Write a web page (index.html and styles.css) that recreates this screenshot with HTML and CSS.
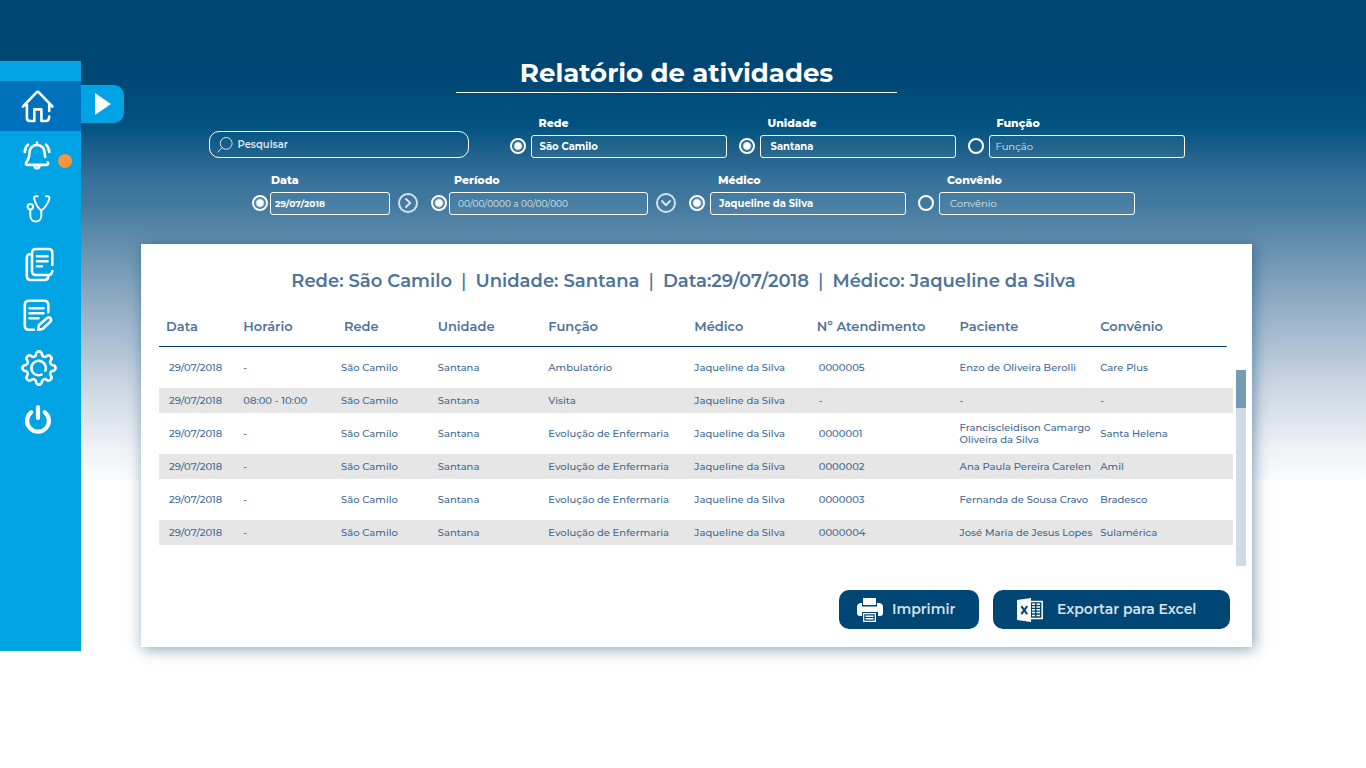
FILE: index.html
```html
<!DOCTYPE html>
<html lang="pt-BR">
<head>
<meta charset="utf-8">
<meta name="viewport" content="width=device-width, initial-scale=1">
<title>Relatório de atividades</title>
<link rel="stylesheet" href="styles.css">
</head>
<body>
<div class="page">
  <nav class="sidebar" aria-label="Menu principal">
    <a class="nav-item active" href="#inicio" aria-label="Início"><svg class="icon" viewBox="0 0 40 40"><path d="M5 20.5 18.3 6.6Q19.7 5.2 21.1 6.6L34.4 20.5M8.9 18V32Q8.9 35 12 35H16.3V23.4H23.4V35H28Q31 35 31.2 30.6M31.2 18V25"/></svg></a>
    <a class="nav-item" href="#avisos" aria-label="Avisos"><svg class="icon" viewBox="0 0 40 40"><path d="M19 5.5V8M27.2 20C26.5 17 27 15.5 25.8 12.3C23 6.5 15 6.5 12.2 12.3C10.8 16 12 19 10 22.5L8.2 25.5Q7.2 27.9 9.5 27.9H28.5Q31 27.9 29.8 25.3M16.6 29Q17 31.3 19 31.3T21.4 29"/><path d="M10 7.6Q6.8 10.5 6.8 15M28 7.6Q31.2 10.5 31.2 15"/></svg><span class="dot"></span></a>
    <a class="nav-item" href="#atendimentos" aria-label="Atendimentos"><svg class="icon thin" viewBox="0 0 40 40"><path d="M19.7 7.3H17.8Q15 8 16.6 11C18 16 20 19 23.3 21.5C27 19 29 16 31 11Q32.4 7.7 29.5 7.3H28M23.3 21.5V26.5C23.3 34.5 12.3 34.5 12.3 26.5V21"/><circle cx="12.3" cy="17.8" r="2.7"/></svg></a>
    <a class="nav-item spaced" href="#documentos" aria-label="Documentos"><svg class="icon" viewBox="0 0 40 40"><path d="M34.3 21V8.7Q34.3 5 30.6 5H18Q14 5 14 9V27Q14 31 18 31H30.5Q34 31 34.3 27M14 10H12.8Q8.8 10 8.8 14V32Q8.8 36 12.8 36H26.2Q30 36 30.4 32M19 12.3H29.5M19 17.3H29.5M19 22.3H24"/></svg></a>
    <a class="nav-item" href="#registros" aria-label="Registros"><svg class="icon" viewBox="0 0 40 40"><path d="M30.3 16.3V9Q30.3 4.7 26 4.7H11Q6.8 4.7 6.8 9V29.5Q6.8 33.7 11 33.7H16M11.5 12.3H25.5M11.5 17.3H25.5M11.5 22.3H20.5M20.2 33.8 21 29 28.8 22.2Q31 20.5 32.6 22.3Q34 24.2 32 26L24.7 33Z"/></svg></a>
    <a class="nav-item" href="#ajustes" aria-label="Ajustes"><svg class="icon" viewBox="0 0 40 40"><path d="M18.1 6.3A2.9 2.9 0 0 1 23.9 6.3A3 3 0 0 0 28.6 8.3A2.9 2.9 0 0 1 32.7 12.4A3 3 0 0 0 34.7 17.1A2.9 2.9 0 0 1 34.7 22.9A3 3 0 0 0 32.7 27.6A2.9 2.9 0 0 1 28.6 31.7A3 3 0 0 0 23.9 33.7A2.9 2.9 0 0 1 18.1 33.7A3 3 0 0 0 13.4 31.7A2.9 2.9 0 0 1 9.3 27.6A3 3 0 0 0 7.3 22.9A2.9 2.9 0 0 1 7.3 17.1A3 3 0 0 0 9.3 12.4A2.9 2.9 0 0 1 13.4 8.3A3 3 0 0 0 18.1 6.3Z"/><path d="M27.3 22.6A7.2 7.2 0 1 0 23.5 26.6"/></svg></a>
    <a class="nav-item" href="#sair" aria-label="Sair"><svg class="icon power" viewBox="0 0 40 40"><path d="M13.3 12.2A10.9 10.9 0 1 0 26.7 12.2M20 7.2V18"/></svg></a>
    <button class="expand" type="button" aria-label="Expandir menu"><svg viewBox="0 0 18 22"><path d="M1 0 17 11 1 22Z"/></svg></button>
  </nav>

  <main class="main">
    <header class="page-title"><h1>Relatório de atividades</h1></header>

    <form class="filters">
      <div class="filter-row">
        <div class="search">
          <svg viewBox="0 0 16 16"><circle cx="9.2" cy="6.4" r="5.9"/><path d="M5 10.8 .8 15.2"/></svg>
          <input type="search" placeholder="Pesquisar" aria-label="Pesquisar">
        </div>
        <div class="field">
          <input class="pick" type="radio" name="usar-rede" aria-label="Filtrar por rede" checked>
          <div class="control"><label for="rede">Rede</label><input id="rede" type="text" value="São Camilo"></div>
        </div>
        <div class="field">
          <input class="pick" type="radio" name="usar-unidade" aria-label="Filtrar por unidade" checked>
          <div class="control"><label for="unidade">Unidade</label><input id="unidade" class="indent" type="text" value="Santana"></div>
        </div>
        <div class="field">
          <input class="pick" type="radio" name="usar-funcao" aria-label="Filtrar por função">
          <div class="control"><label for="funcao">Função</label><input id="funcao" class="tight" type="text" placeholder="Função"></div>
        </div>
      </div>
      <div class="filter-row second">
        <div class="field near date">
          <input class="pick" type="radio" name="usar-data" aria-label="Filtrar por data" checked>
          <div class="control"><label for="data">Data</label><input id="data" type="text" value="29/07/2018"></div>
          <button class="chevron" type="button" aria-label="Próxima data"><svg viewBox="0 0 20 20"><circle cx="10" cy="10" r="9"/><path d="M8 6 12.2 10 8 14"/></svg></button>
        </div>
        <div class="field near period">
          <input class="pick" type="radio" name="usar-periodo" aria-label="Filtrar por período" checked>
          <div class="control"><label for="periodo">Período</label><input id="periodo" type="text" placeholder="00/00/0000 a 00/00/000"></div>
          <button class="chevron" type="button" aria-label="Abrir período"><svg viewBox="0 0 20 20"><circle cx="10" cy="10" r="9"/><path d="M6 8 10 12.2 14 8"/></svg></button>
        </div>
        <div class="field">
          <input class="pick" type="radio" name="usar-medico" aria-label="Filtrar por médico" checked>
          <div class="control"><label for="medico">Médico</label><input id="medico" type="text" value="Jaqueline da Silva"></div>
        </div>
        <div class="field">
          <input class="pick" type="radio" name="usar-convenio" aria-label="Filtrar por convênio">
          <div class="control"><label for="convenio">Convênio</label><input id="convenio" class="indent" type="text" placeholder="Convênio"></div>
        </div>
      </div>
    </form>

    <section class="report">
      <h2 class="summary"><span>Rede: São Camilo</span><span class="bar">|</span><span>Unidade: Santana</span><span class="bar">|</span><span>Data:29/07/2018</span><span class="bar">|</span><span>Médico: Jaqueline da Silva</span></h2>
      <div class="table-area">
        <table class="activities">
          <colgroup><col class="c-data"><col class="c-horario"><col class="c-rede"><col class="c-unidade"><col class="c-funcao"><col class="c-medico"><col class="c-numero"><col class="c-paciente"><col class="c-convenio"></colgroup>
          <thead><tr><th>Data</th><th>Horário</th><th class="shifted">Rede</th><th>Unidade</th><th>Função</th><th>Médico</th><th>Nº Atendimento</th><th>Paciente</th><th>Convênio</th></tr></thead>
          <tbody>
            <tr><td>29/07/2018</td><td>-</td><td>São Camilo</td><td>Santana</td><td>Ambulatório</td><td>Jaqueline da Silva</td><td class="number">0000005</td><td>Enzo de Oliveira Berolli</td><td>Care Plus</td></tr>
            <tr><td>29/07/2018</td><td>08:00 - 10:00</td><td>São Camilo</td><td>Santana</td><td>Visita</td><td>Jaqueline da Silva</td><td class="number">-</td><td>-</td><td>-</td></tr>
            <tr><td>29/07/2018</td><td>-</td><td>São Camilo</td><td>Santana</td><td>Evolução de Enfermaria</td><td>Jaqueline da Silva</td><td class="number">0000001</td><td>Franciscleidison Camargo<br>Oliveira da Silva</td><td>Santa Helena</td></tr>
            <tr><td>29/07/2018</td><td>-</td><td>São Camilo</td><td>Santana</td><td>Evolução de Enfermaria</td><td>Jaqueline da Silva</td><td class="number">0000002</td><td>Ana Paula Pereira Carelen</td><td>Amil</td></tr>
            <tr><td>29/07/2018</td><td>-</td><td>São Camilo</td><td>Santana</td><td>Evolução de Enfermaria</td><td>Jaqueline da Silva</td><td class="number">0000003</td><td>Fernanda de Sousa Cravo</td><td>Bradesco</td></tr>
            <tr><td>29/07/2018</td><td>-</td><td>São Camilo</td><td>Santana</td><td>Evolução de Enfermaria</td><td>Jaqueline da Silva</td><td class="number">0000004</td><td>José Maria de Jesus Lopes</td><td>Sulamérica</td></tr>
          </tbody>
        </table>
        <div class="scrollbar"><div class="thumb"></div></div>
      </div>
      <div class="actions">
        <button class="action print" type="button"><svg viewBox="0 0 26 24"><path class="solid" d="M6 0H19V7H6ZM3 5H5V8.5H20V5H23Q26 6 26 9V15Q26 18 23 18H21V14H5V18H3Q0 18 0 15V9Q0 6 3 5Z"/><path class="solid" fill-rule="evenodd" d="M6 15H19V24H6ZM7.3 16.3V22.7H17.7V16.3Z"/><path class="line" d="M8.5 18.2H16.5M8.5 20.8H16.5"/></svg><span>Imprimir</span></button>
        <button class="action excel" type="button"><svg viewBox="0 0 26 24"><path class="solid" d="M0 2 14 0V24L0 22Z"/><path class="cross" d="M4.3 8.2 10.2 16.2M10.2 8.2 4.3 16.2"/><path class="line" d="M14 3.5H25.2V20.5H14"/><path class="line" d="M15 6.2H18M19.5 6.2H23M15 9H18M19.5 9H23M15 11.8H18M19.5 11.8H23M15 14.6H18M19.5 14.6H23M15 17.4H18M19.5 17.4H23"/></svg><span>Exportar para Excel</span></button>
      </div>
    </section>
  </main>
</div>
</body>
</html>
```
FILE: styles.css
```css
* { box-sizing: border-box; }

body {
  margin: 0;
  min-height: 100vh;
  background: #fff linear-gradient(#004673 0, #004674 75px, #00507d 112px, #005280 125px, #22638c 155px, #37719a 180px, #427aa0 205px, #5e8aac 235px, #7b9fb9 275px, #98b1c9 312px, #b0c4d4 350px, #cbd7e1 385px, #dfe5ed 420px, #eff3f6 450px, #fafbfc 480px) top / 100% 480px no-repeat;
  font-family: "Montserrat", Inter, "Open Sans", sans-serif;
  color: #fff;
}

button, input { font-family: inherit; }
button { padding: 0; border: 0; cursor: pointer; }

.page { display: flex; align-items: flex-start; }

/* Sidebar */
.sidebar {
  position: relative;
  flex: none;
  width: 81px;
  min-height: 590px;
  margin-top: 61px;
  padding-top: 20px;
  background: #00a3e4;
}
.nav-item {
  position: relative;
  display: flex;
  align-items: center;
  height: 52px;
  padding-left: 18px;
}
.nav-item.active { height: 50px; background: #0071bc; }
.nav-item.spaced { margin-top: 3px; }
.icon {
  width: 40px;
  height: 40px;
  fill: none;
  stroke: #fff;
  stroke-width: 2.6;
  stroke-linecap: round;
  stroke-linejoin: round;
}
.icon.thin { stroke-width: 2; }
.icon.power { stroke-width: 4.2; }
.dot {
  position: absolute;
  top: 23px;
  left: 58px;
  width: 14px;
  height: 14px;
  border-radius: 50%;
  background: #f7943e;
}
.expand {
  position: absolute;
  top: 24px;
  left: 100%;
  display: flex;
  align-items: center;
  width: 43px;
  height: 38px;
  padding-left: 13px;
  border-radius: 0 10px 10px 0;
  background: #00a3e4;
}
.expand svg { width: 18px; height: 22px; fill: #fff; }

/* Title */
.main { flex: 1; min-width: 0; padding: 56px 114px 40px 60px; }
.page-title { display: flex; justify-content: center; padding-right: 40px; }
.page-title h1 {
  width: 441px;
  margin: 0;
  padding-bottom: 2px;
  border-bottom: 1px solid #fff;
  font-size: 26px;
  line-height: 34px;
  font-weight: 700;
  text-align: center;
  white-space: nowrap;
}

/* Filters */
.filter-row {
  display: flex;
  justify-content: center;
  align-items: flex-end;
  gap: 12px;
  margin-top: 23px;
}
.filter-row.second { margin-top: 15px; padding-right: 6px; }
.search {
  display: flex;
  align-items: center;
  gap: 5px;
  width: 260px;
  height: 27px;
  margin-right: 29px;
  padding-left: 7px;
  border: 1px solid #fff;
  border-radius: 10px;
}
.search svg { flex: none; width: 16px; height: 16px; fill: none; stroke: #dbe5ed; }
.search input {
  flex: 1;
  min-width: 0;
  padding: 0;
  border: 0;
  background: none;
  color: #fff;
  font-size: 10px;
  font-weight: 600;
}
.search input::placeholder { color: #dbe5ed; opacity: 1; }
.field { display: flex; align-items: flex-end; gap: 5px; }
.control { width: 196px; }
.control label {
  display: block;
  padding: 0 0 4px 8px;
  font-size: 11px;
  line-height: 15px;
  font-weight: 800;
}
.control input {
  display: block;
  width: 100%;
  height: 23px;
  padding: 0 8px 1px;
  border: 1px solid #fff;
  border-radius: 3px;
  background: rgba(255, 255, 255, .04);
  color: #fff;
  font-size: 10px;
  font-weight: 700;
}
.control input::placeholder { color: #dbe5ed; font-weight: 400; opacity: 1; }
.control .indent { padding-left: 10px; }
.control .tight { padding-left: 6px; }
.pick {
  appearance: none;
  flex: none;
  width: 16px;
  height: 16px;
  margin: 0 0 4px;
  border: 2px solid #fff;
  border-radius: 50%;
}
.pick:checked { background: radial-gradient(circle, #fff 3px, transparent 5px); }
.near { gap: 2px; margin-right: 1px; }
.near label { padding-left: 5px; }
.date .control { width: 120px; }
.date .control label { padding-left: 1px; }
.date .control input { padding: 0 4px; font-size: 9px; }
.period .control { width: 199px; }
.period .control input { font-size: 9px; }
.chevron { width: 20px; height: 20px; margin: 0 0 2px 6px; background: none; }
.chevron svg {
  display: block;
  fill: none;
  stroke: #d7e2eb;
  stroke-width: 2;
  stroke-linecap: round;
  stroke-linejoin: round;
}

/* Report card */
.report {
  margin-top: 29px;
  padding: 24px 6px 18px 18px;
  background: #fff;
  box-shadow: 2px 2px 14px rgba(0, 69, 115, .5);
  color: #4f7499;
}
.summary {
  display: flex;
  justify-content: center;
  gap: 9px;
  margin: 0;
  padding-right: 38px;
  font-size: 18px;
  line-height: 26px;
  font-weight: 600;
  white-space: nowrap;
}
.summary .bar { font-weight: 500; }
.table-area { display: flex; gap: 3px; }
.activities {
  flex: 1;
  min-width: 0;
  margin: 11px 0 21px;
  border-collapse: collapse;
  table-layout: fixed;
  font-size: 10px;
  line-height: 12px;
  font-weight: 500;
}
.c-data { width: 7.2%; }
.c-horario { width: 9.1%; }
.c-rede { width: 9%; }
.c-unidade { width: 10.3%; }
.c-funcao { width: 13.6%; }
.c-medico { width: 11.4%; }
.c-numero { width: 13.3%; }
.c-paciente { width: 13.1%; }
.c-convenio { width: 13%; }
.activities th, .activities td { padding: 0 0 0 7px; text-align: left; white-space: nowrap; }
.activities td:first-child { padding-left: 10px; }
.activities thead { background: linear-gradient(#00396b, #00396b) left bottom / calc(100% - 6px) 1px no-repeat; }
.activities th { height: 42px; font-size: 13px; font-weight: 600; }
.activities th.shifted { padding-left: 10px; }
.activities td { height: 41px; color: #426a93; }
.activities tbody tr:nth-child(even) { background: #e6e6e6; }
.activities tbody tr:nth-child(even) td { height: 25px; }
.activities td.number { padding-left: 9px; }
.scrollbar { flex: none; width: 10px; margin-top: 76px; background: #cfdbe6; }
.thumb { height: 38px; background: #759ab6; }

/* Actions */
.actions { display: flex; justify-content: flex-end; gap: 14px; padding: 24px 16px 0 0; }
.action {
  display: flex;
  align-items: center;
  height: 39px;
  border-radius: 10px;
  background: #004674;
  color: #d7e1e9;
  font-size: 14px;
  font-weight: 600;
  white-space: nowrap;
}
.action span { padding-bottom: 2px; }
.action svg { flex: none; width: 26px; height: 24px; }
.print { width: 140px; padding-left: 18px; gap: 9px; }
.excel { width: 237px; padding-left: 24px; gap: 14px; }
.solid { fill: #fff; }
.line { fill: none; stroke: #fff; stroke-width: 1.5; }
.cross { fill: none; stroke: #004674; stroke-width: 2; }
```
